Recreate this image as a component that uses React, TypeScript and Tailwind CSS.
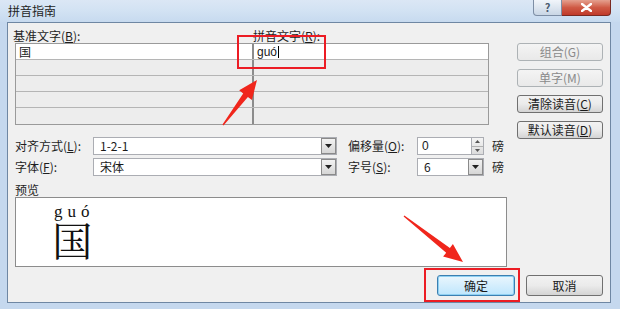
import type { ReactNode } from "react";

const cjk = "font-['Microsoft_YaHei','Noto_Sans_CJK_SC',sans-serif]";

function arrowPoints(x1: number, y1: number, x2: number, y2: number) {
  const dx = x2 - x1;
  const dy = y2 - y1;
  const len = Math.hypot(dx, dy);
  const ux = dx / len;
  const uy = dy / len;
  const px = -uy;
  const py = ux;
  const head = 19;
  const hw = 8;
  const sw = 3;
  const tw = 0.6;
  const bx = x2 - ux * head;
  const by = y2 - uy * head;
  const pts = [
    [x1 + px * tw, y1 + py * tw],
    [bx + px * sw, by + py * sw],
    [bx + px * hw, by + py * hw],
    [x2, y2],
    [bx - px * hw, by - py * hw],
    [bx - px * sw, by - py * sw],
    [x1 - px * tw, y1 - py * tw],
  ];
  return pts.map((p) => p.map((v) => v.toFixed(1)).join(",")).join(" ");
}

function WinButton({ children, disabled, focused, className = "" }: { children: ReactNode; disabled?: boolean; focused?: boolean; className?: string }) {
  return (
    <div
      className={`flex items-center justify-center rounded-[3px] border text-[12px] ${
        disabled
          ? "border-[#adb2b5] bg-linear-to-b from-[#f4f4f4] to-[#e9e9e9] text-[#8a8a8a]"
          : focused
            ? "border-[#3c7fb1] bg-linear-to-b from-[#eaf6fd] to-[#bee6fd] text-[#1a1a1a] shadow-[inset_0_0_0_1px_#8fd0f2]"
            : "border-[#707070] bg-linear-to-b from-[#f2f2f2] via-[#ebebeb] to-[#d4d4d4] text-[#1a1a1a]"
      } ${className}`}
    >
      {children}
    </div>
  );
}

function DropButton() {
  return (
    <div className="flex h-full w-[15px] items-center justify-center border border-[#8a8a8a] bg-linear-to-b from-[#f2f2f2] to-[#d6d6d6]">
      <svg width="7" height="4" viewBox="0 0 7 4">
        <path d="M0 0h7L3.5 4z" fill="#222" />
      </svg>
    </div>
  );
}

function Combo({ value, className = "" }: { value: string; className?: string }) {
  return (
    <div className={`flex h-full items-center border border-[#abadb3] bg-white ${className}`}>
      <span className="flex-1 pl-[6px] text-[12px] text-[#1a1a1a]">{value}</span>
      <DropButton />
    </div>
  );
}

function Spinner() {
  return (
    <div className="flex h-full w-[12px] flex-col border-l border-[#abadb3] bg-linear-to-b from-[#f4f4f4] to-[#dcdcdc]">
      <div className="flex flex-1 items-center justify-center border-b border-[#b0b0b0]">
        <svg width="5" height="3" viewBox="0 0 5 3">
          <path d="M0 3h5L2.5 0z" fill="#555" />
        </svg>
      </div>
      <div className="flex flex-1 items-center justify-center">
        <svg width="5" height="3" viewBox="0 0 5 3">
          <path d="M0 0h5L2.5 3z" fill="#555" />
        </svg>
      </div>
    </div>
  );
}

function Label({ text, hot, rest, className = "" }: { text: string; hot: string; rest: string; className?: string }) {
  return (
    <span className={`text-[12px] text-[#1e1e1e] ${className}`}>
      {text}(<span className="underline">{hot}</span>){rest}
    </span>
  );
}

export default function App() {
  const rows = [0, 1, 2, 3, 4];
  return (
    <div className={`relative flex h-[309px] w-[620px] flex-col overflow-hidden bg-[#c5d8ee] ${cjk}`}>
      {/* title bar */}
      <div className="flex h-[22px] items-start justify-between bg-linear-to-b from-[#dbe7f5] via-[#d2e2f3] to-[#c7daef]">
        <span className="mt-[4px] pl-[8px] text-[12px] leading-[14px] text-[#1e1e1e]">拼音指南</span>
        <div className="mr-[9px] flex h-[16px]">
          <div className="flex w-[29px] items-center justify-center rounded-bl-[4px] border border-t-0 border-[#7d8ea5] bg-linear-to-b from-[#f1f5fa] to-[#c9d6e5] text-[11px] font-bold text-[#4a5a70]">
            ?
          </div>
          <div className="flex w-[49px] items-center justify-center rounded-br-[4px] border border-l-0 border-t-0 border-[#7a2a22] bg-linear-to-b from-[#e4a08f] via-[#cf5a45] to-[#c0392a]">
            <svg width="11" height="9" viewBox="0 0 11 9">
              <path d="M1 1l9 7M10 1L1 8" stroke="#fff" strokeWidth="2.4" strokeLinecap="round" />
            </svg>
          </div>
        </div>
      </div>

      {/* client */}
      <div className="mb-[6px] ml-[7px] mr-[9px] flex flex-1 flex-col border border-[#6f87a3] bg-[#f0f0f0] pl-[7px] pr-[7px] pt-[5px]">
        <div className="flex h-[109px] items-start">
          <div className="flex w-[474px] flex-col">
            <div className="flex h-[15px] text-[12px] leading-[15px]">
              <div className="w-[238px]">
                <Label text="基准文字" hot="B" rest=":" className="-ml-[2px]" />
              </div>
              <Label text="拼音文字" hot="R" rest=":" />
            </div>
            <div className="border border-[#9a9a9a]">
              {rows.map((r) => (
                <div
                  key={r}
                  className={`flex h-[16px] ${r < 4 ? "border-b border-[#b5b5b5]" : ""} ${r === 0 ? "bg-white" : "bg-[#ededed]"}`}
                >
                  <div className="flex w-[236px] items-center pl-[3px] text-[12px] text-[#1a1a1a]">{r === 0 ? "国" : ""}</div>
                  <div className="w-[2px] bg-[#8c8c8c]" />
                  <div className="flex flex-1 items-center pl-[3px] font-['Liberation_Sans',sans-serif] text-[12px] text-[#1a1a1a]">
                    {r === 0 ? (
                      <>
                        guó<span className="ml-[1px] inline-block h-[12px] w-px bg-black" />
                      </>
                    ) : null}
                  </div>
                </div>
              ))}
            </div>
          </div>
          <div className="ml-[28px] mt-[15px] flex w-[86px] flex-col gap-[8px]">
            <WinButton disabled className="h-[18px]">组合(G)</WinButton>
            <WinButton disabled className="h-[18px]">单字(M)</WinButton>
            <WinButton className="h-[18px]">
              清除读音(<span className="underline">C</span>)
            </WinButton>
            <WinButton className="h-[18px]">
              默认读音(<span className="underline">D</span>)
            </WinButton>
          </div>
        </div>

        {/* option rows */}
        <div className="flex h-[18px] items-center">
          <Label text="对齐方式" hot="L" rest=":" className="w-[78px]" />
          <Combo value="1-2-1" className="w-[244px]" />
          <Label text="偏移量" hot="O" rest=":" className="ml-[11px] w-[69px]" />
          <div className="flex h-full w-[67px] items-center border border-[#abadb3] bg-white">
            <span className="flex-1 pl-[4px] font-['Liberation_Sans',sans-serif] text-[12px] text-[#1a1a1a]">0</span>
            <Spinner />
          </div>
          <span className="ml-[8px] text-[12px] text-[#1e1e1e]">磅</span>
        </div>
        <div className="mt-[3px] flex h-[18px] items-center">
          <Label text="字体" hot="F" rest=":" className="w-[78px]" />
          <Combo value="宋体" className="w-[244px]" />
          <Label text="字号" hot="S" rest=":" className="ml-[11px] w-[69px]" />
          <Combo value="6" className="w-[67px]" />
          <span className="ml-[8px] text-[12px] text-[#1e1e1e]">磅</span>
        </div>

        <div className="mt-[6px] h-[15px] text-[12px] leading-[15px] text-[#1e1e1e]">预览</div>
        <div className="flex h-[70px] w-[492px] border border-[#8c8c8c] bg-white">
          <div className="ml-[38px] mt-[7px] flex flex-col items-center">
            <span className="font-['Liberation_Serif',serif] text-[17px] leading-[14px] tracking-[5px] text-[#111]">guó</span>
            <span className="-ml-[4px] font-['Noto_Serif_CJK_SC','Noto_Sans_CJK_SC',serif] text-[40px] leading-[40px] text-[#111]">国</span>
          </div>
        </div>

        <div className="mt-[8px] flex justify-end gap-[11px]">
          <WinButton focused className="h-[21px] w-[78px]">确定</WinButton>
          <WinButton className="h-[21px] w-[77px]">取消</WinButton>
        </div>
      </div>

      {/* annotations */}
      <div className="absolute left-[237px] top-[35px] h-[34px] w-[89px] border-2 border-[#ec1c24]" />
      <div className="absolute left-[424px] top-[268px] h-[34px] w-[96px] border-2 border-[#ec1c24]" />
      <svg className="pointer-events-none absolute left-0 top-0" width="620" height="309">
        <polygon points={arrowPoints(223, 125, 257, 80)} fill="#f0261c" />
        <polygon points={arrowPoints(404, 216, 463, 262)} fill="#f0261c" />
      </svg>
    </div>
  );
}
